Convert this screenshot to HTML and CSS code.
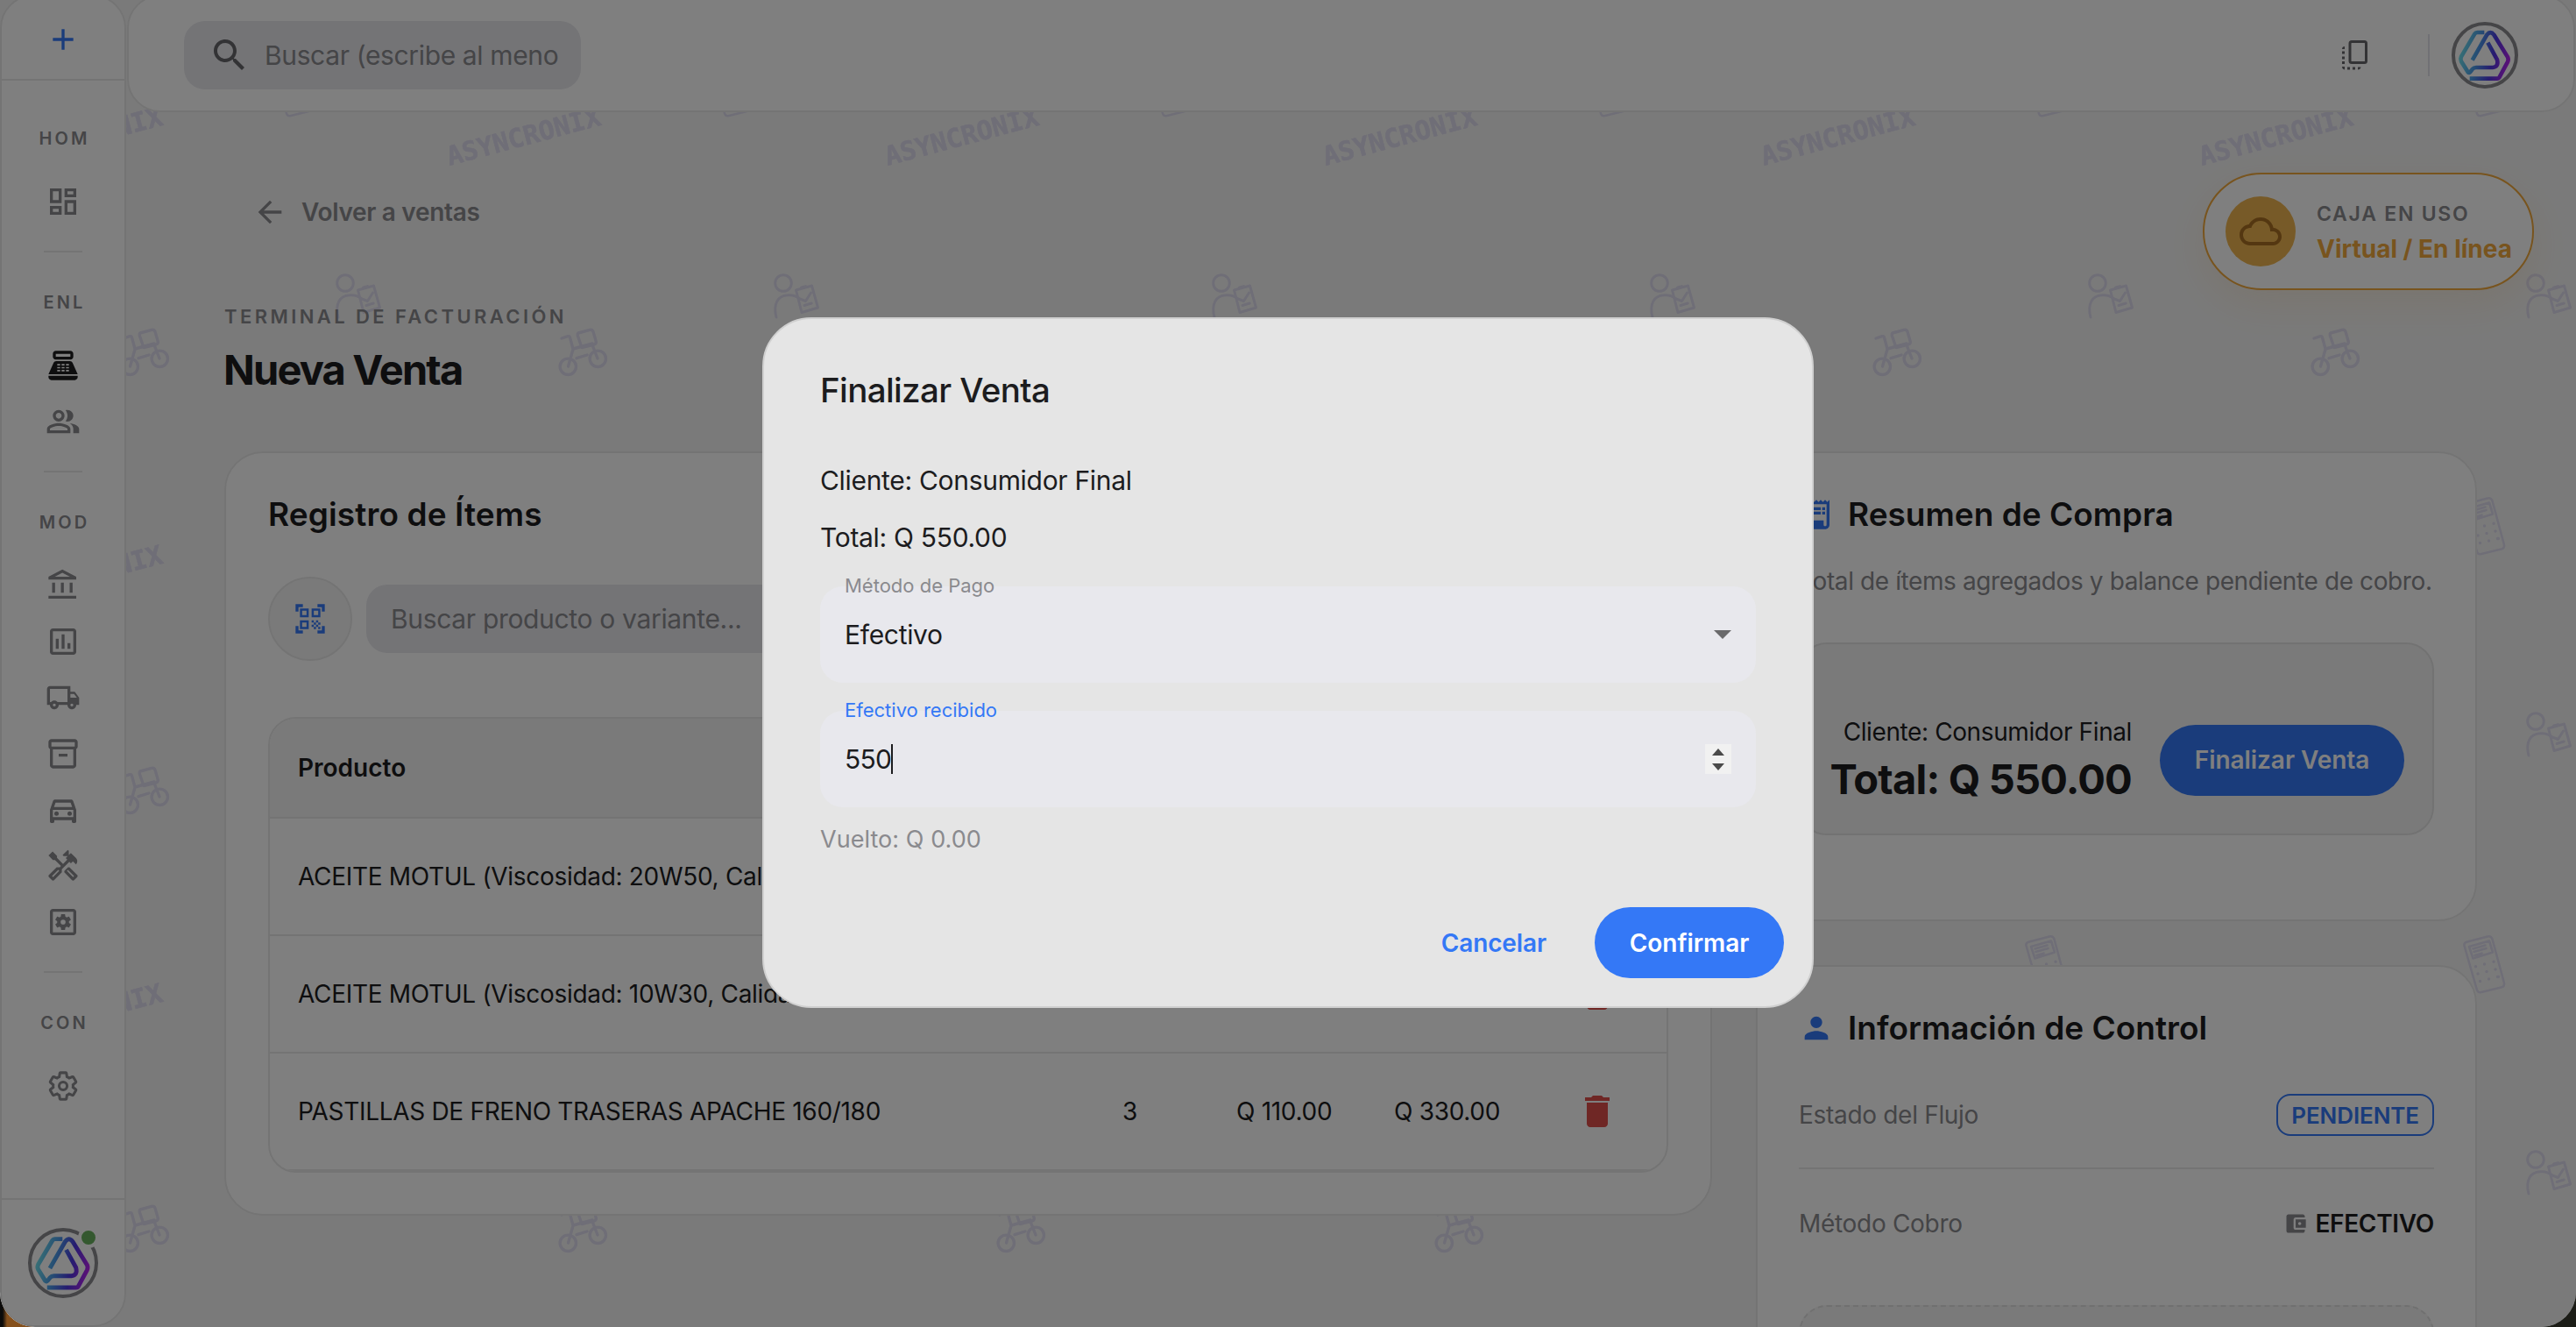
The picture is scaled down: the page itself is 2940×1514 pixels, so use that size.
FILE: index.html
```html
<!DOCTYPE html>
<html lang="es">
<head>
    <meta charset="UTF-8">
    <title>Nueva Venta - Asyncronix</title>
    <link rel="stylesheet" href="styles.css">
</head>
<body>
    <!-- Logo compartido -->
    <svg class="sprite" aria-hidden="true">
        <defs>
            <linearGradient id="logo-grad" gradientUnits="userSpaceOnUse" x1="48" y1="150" x2="226" y2="185">
                <stop offset="0" stop-color="#72e4ec"/>
                <stop offset=".35" stop-color="#4a9ae8"/>
                <stop offset=".65" stop-color="#4c38e0"/>
                <stop offset="1" stop-color="#c020f0"/>
            </linearGradient>
            <symbol id="logo" viewBox="24 45 228 228">
                <g fill="none" stroke="url(#logo-grad)" stroke-width="14">
                    <path d="M136 81H112Q106 81 103 86L57 164Q53 172 57 180L80 217Q84 221 88 216L96 206Q100 201 108 201H165Q186 199 180 174L148 116"/>
                    <path d="M95 176L145 89Q157 74 169 89L216 165Q220 174 216 182L188 234Q186 239 180 239H86"/>
                </g>
            </symbol>
            <symbol id="i-gear" viewBox="0 0 24 24">
                <path d="M19.43 12.98c.04-.32.07-.64.07-.98s-.03-.66-.07-.98l2.11-1.65c.19-.15.24-.42.12-.64l-2-3.46c-.09-.16-.26-.25-.44-.25-.06 0-.12.01-.17.03l-2.49 1c-.52-.4-1.08-.73-1.69-.98l-.38-2.65C14.46 2.18 14.25 2 14 2h-4c-.25 0-.46.18-.49.42l-.38 2.65c-.61.25-1.17.59-1.69.98l-2.49-1c-.06-.02-.12-.03-.18-.03-.17 0-.34.09-.43.25l-2 3.46c-.13.22-.07.49.12.64l2.11 1.65c-.04.32-.07.65-.07.98s.03.66.07.98l-2.11 1.65c-.19.15-.24.42-.12.64l2 3.46c.09.16.26.25.44.25.06 0 .12-.01.17-.03l2.49-1c.52.4 1.08.73 1.69.98l.38 2.65c.03.24.24.42.49.42h4c.25 0 .46-.18.49-.42l.38-2.65c.61-.25 1.17-.59 1.69-.98l2.49 1c.06.02.12.03.18.03.17 0 .34-.09.43-.25l2-3.46c.12-.22.07-.49-.12-.64l-2.11-1.65z"/>
            </symbol>
            <symbol id="i-delete" viewBox="0 0 24 24">
                <path d="M6 19c0 1.1.9 2 2 2h8c1.1 0 2-.9 2-2V7H6v12zM19 4h-3.500l-1-1h-5l-1 1H5v2h14V4z"/>
            </symbol>
        </defs>
    </svg>

    <div class="window">
        <!-- Fondo con patrón -->
        <svg class="pattern" width="2940" height="1514" aria-hidden="true">
            <defs>
                <pattern id="tile" width="500" height="500" patternUnits="userSpaceOnUse">
                    <text class="pattern-text" transform="translate(13 189) rotate(-15)">ASYNCRONIX</text>
                    <g fill="none" stroke="#dfdcee" stroke-width="3.4" stroke-linecap="round" stroke-linejoin="round">
                        <path d="M141 386l7-2.300q2-.5 2.500 1.500L154 398l22-6M154 398.500L148.500 418M176 393.500L182 409M158 408.700L170 405"/>
                        <path d="M160 380l13-3.600q3-.8 4 2l3.200 11q.6 2.800-2 3.600L164 396.500l-4.500-13q-.8-2.600.5-3.500z"/>
                        <circle cx="148.300" cy="418.300" r="9.200"/>
                        <circle cx="182.300" cy="409.300" r="9.200"/>
                    </g>
                    <g fill="none" stroke="#dfdcee" stroke-width="3" stroke-linecap="round" stroke-linejoin="round">
                        <circle cx="394" cy="323" r="9.300"/>
                        <path d="M386 362C382 346 388 337.500 399 336.800Q407 336 413 341L419.500 343.500L425.500 334"/>
                        <path d="M408.500 331l18-5 7 25-18.500 5.500zM414.500 328l5-1.400M418 348.500l8.200-2.500"/>
                    </g>
                    <g fill="none" stroke="#dfdcee" stroke-width="2.600" stroke-linecap="round" stroke-linejoin="round">
                        <path d="M316 74.500l23-6q4-1 5.500 3l13.500 50q.8 3.500-2.500 4.800l-23.500 5.700q-4 1-5-2.500L312.500 79q-.7-3.500 3.500-4.500z"/>
                        <path d="M318 80l23-6.500 4 13-22.500 7zM322.500 82.500l14-4M323.500 86l14-4M324.500 90l8-2.300"/>
                        <path stroke-width="3.400" d="M325.500 102.700h.1M335.500 100h.1M346 97.300h.1M328 111h.1M338 108.500h.1M348 106h.1M330.500 119.500h.1M340.500 117h.1M350.500 114.500h1"/>
                    </g>
                </pattern>
            </defs>
            <rect width="2940" height="1514" fill="url(#tile)"/>
        </svg>

        <aside class="sidebar">
            <div class="sidebar-top">
                <svg class="icon icon-blue" viewBox="0 0 24 24"><path d="M19 13h-6v6h-2v-6H5v-2h6V5h2v6h6v2z"/></svg>
            </div>
            <nav class="nav">
                <div class="nav-label">HOM</div>
                <a class="nav-item"><svg class="icon" viewBox="0 0 24 24"><path d="M19 5v2h-4V5h4M9 5v6H5V5h4m10 8v6h-4v-6h4M9 17v2H5v-2h4M21 3h-8v6h8V3zM11 3H3v10h8V3zm10 8h-8v10h8V11zm-10 4H3v6h8v-6z"/></svg></a>
                <hr class="nav-line">
                <div class="nav-label">ENL</div>
                <a class="nav-item active"><svg class="icon" viewBox="0 0 24 24"><path d="M17 2H7c-1.100 0-2 .9-2 2v2c0 1.100.9 2 2 2h10c1.100 0 2-.9 2-2V4c0-1.100-.9-2-2-2zm0 4H7V4h10v2zm3 16H4c-1.100 0-2-.9-2-2v-1h20v1c0 1.100-.9 2-2 2z"/><path fill-rule="evenodd" d="M18.530 10.190C18.210 9.470 17.490 9 16.700 9H7.300c-.79 0-1.510.47-1.830 1.190L2 18h20zM8 11h2v1H8zm0 2h2v1H8zm0 2h2v1H8zm3-4h2v1h-2zm0 2h2v1h-2zm0 2h2v1h-2zm3-4h2v1h-2zm0 2h2v1h-2zm0 2h2v1h-2z"/></svg></a>
                <a class="nav-item"><svg class="icon" viewBox="0 0 24 24"><path d="M16.670 13.130C18.040 14.060 19 15.320 19 17v3h4v-3c0-2.180-3.570-3.470-6.330-3.870zM15 12c2.210 0 4-1.790 4-4s-1.790-4-4-4c-.47 0-.91.1-1.330.24C14.500 5.270 15 6.580 15 8s-.5 2.730-1.330 3.760c.42.14.86.24 1.330.24zM9 12c2.210 0 4-1.790 4-4s-1.790-4-4-4-4 1.790-4 4 1.790 4 4 4zm0-6c1.100 0 2 .9 2 2s-.9 2-2 2-2-.9-2-2 .9-2 2-2zM9 13c-2.670 0-8 1.340-8 4v3h16v-3c0-2.660-5.330-4-8-4zm6 5H3v-.99C3.200 16.290 6.300 15 9 15s5.800 1.290 6 2v1z"/></svg></a>
                <hr class="nav-line">
                <div class="nav-label">MOD</div>
                <a class="nav-item"><svg class="icon" viewBox="0 0 24 24"><path d="M6.500 10h-2v7h2v-7zm6 0h-2v7h2v-7zm8.500 9H2v2h19v-2zm-2.500-9h-2v7h2v-7zm-7-6.740L16.710 6H6.290l5.210-2.740m0-2.260L2 6v2h19V6l-9.500-5z"/></svg></a>
                <a class="nav-item"><svg class="icon" viewBox="0 0 24 24"><path d="M9 17H7v-7h2v7zm4 0h-2V7h2v10zm4 0h-2v-4h2v4zm2 2H5V5h14v14zm0-16H5c-1.100 0-2 .9-2 2v14c0 1.100.9 2 2 2h14c1.100 0 2-.9 2-2V5c0-1.100-.9-2-2-2z"/></svg></a>
                <a class="nav-item"><svg class="icon" viewBox="0 0 24 24"><path d="M20 8h-3V4H3c-1.100 0-2 .9-2 2v11h2c0 1.660 1.340 3 3 3s3-1.340 3-3h6c0 1.660 1.340 3 3 3s3-1.340 3-3h2v-5l-3-4zm-.5 1.500l1.960 2.500H17V9.500h2.500zM6 18c-.55 0-1-.45-1-1s.45-1 1-1 1 .45 1 1-.45 1-1 1zm2.220-3c-.55-.61-1.330-1-2.220-1s-1.670.39-2.220 1H3V6h12v9H8.220zM18 18c-.55 0-1-.45-1-1s.45-1 1-1 1 .45 1 1-.45 1-1 1z"/></svg></a>
                <a class="nav-item"><svg class="icon" viewBox="0 0 24 24"><path d="M20 2H4c-1 0-2 .9-2 2v3.010c0 .72.43 1.340 1 1.690V20c0 1.100 1.100 2 2 2h14c.9 0 2-.9 2-2V8.700c.57-.35 1-.97 1-1.690V4c0-1.100-1-2-2-2zm-1 18H5V9h14v11zm1-13H4V4h16v3zM9 12h6v2H9z"/></svg></a>
                <a class="nav-item"><svg class="icon" viewBox="0 0 24 24"><path d="M18.920 6.010C18.720 5.420 18.160 5 17.500 5h-11c-.66 0-1.210.42-1.420 1.010L3 12v8c0 .55.45 1 1 1h1c.55 0 1-.45 1-1v-1h12v1c0 .55.45 1 1 1h1c.55 0 1-.45 1-1v-8l-2.080-5.990zM6.850 7h10.290l1.080 3.110H5.770L6.850 7zM19 17H5v-5h14v5z"/><circle cx="7.500" cy="14.500" r="1.500"/><circle cx="16.500" cy="14.500" r="1.500"/></svg></a>
                <a class="nav-item"><svg class="icon" viewBox="0 0 24 24"><path d="M21.670 18.170l-5.300-5.300h-.99l-2.540 2.540v.99l5.300 5.300c.39.39 1.020.39 1.410 0l2.120-2.120c.39-.38.39-1.020 0-1.410zM18.840 19.590l-4.240-4.240.71-.71 4.240 4.240-.71.71z"/><path d="M17.340 10.190l1.410-1.410 2.120 2.120c1.170-1.170 1.170-3.070 0-4.240l-3.540-3.540-1.410 1.410V1.710L15.220 1l-3.540 3.540.71.71h2.830l-1.410 1.410 1.060 1.060-2.890 2.890-4.130-4.130V5.060L4.830 2.040 2 4.870 5.030 7.900h1.410l4.130 4.130-.85.85H7.600l-5.300 5.300c-.39.39-.39 1.020 0 1.410l2.120 2.120c.39.39 1.020.39 1.410 0l5.300-5.300v-2.120l5.150-5.150 1.060 1.050zM9.380 15.340l-4.240 4.240-.71-.71 4.240-4.240.71.71z"/></svg></a>
                <a class="nav-item"><svg class="icon" viewBox="0 0 24 24"><path d="M19 3H5c-1.100 0-2 .9-2 2v14c0 1.100.9 2 2 2h14c1.100 0 2-.9 2-2V5c0-1.100-.9-2-2-2zm0 16H5V5h14v14z"/><use href="#i-gear" x="5.500" y="5.500" width="13" height="13"/><circle cx="12" cy="12" r="1.700" fill="#fff"/></svg></a>
                <hr class="nav-line">
                <div class="nav-label">CON</div>
                <a class="nav-item"><svg class="icon" viewBox="0 0 24 24"><g fill="none" stroke="currentColor" stroke-width="2" transform="translate(1.100 1.100) scale(.91)"><use href="#i-gear" width="24" height="24"/><circle cx="12" cy="12" r="3"/></g></svg></a>
            </nav>
            <div class="sidebar-bottom">
                <div class="avatar avatar-lg">
                    <svg class="avatar-logo"><use href="#logo"/></svg>
                    <span class="status-dot"></span>
                </div>
            </div>
        </aside>

        <div class="main">
            <header class="topbar">
                <div class="search">
                    <svg class="search-icon" viewBox="0 0 24 24"><path d="M15.500 14h-.79l-.28-.27C15.410 12.590 16 11.110 16 9.500 16 5.910 13.090 3 9.500 3S3 5.910 3 9.500 5.910 16 9.500 16c1.610 0 3.090-.59 4.230-1.570l.27.28v.79l5 4.990L20.490 19l-4.990-5zm-6 0C7.010 14 5 11.990 5 9.500S7.010 5 9.500 5 14 7.010 14 9.500 11.990 14 9.500 14z"/></svg>
                    <span>Buscar (escribe al meno</span>
                </div>
                <div class="topbar-right">
                    <svg class="copy-icon" viewBox="0 0 30 36"><rect x="9" y="2.500" width="18.500" height="24" rx="2" fill="none" stroke="currentColor" stroke-width="3"/><path d="M3 8v3H0Q0 8 3 8zM0 13.500h3v3H0zM0 19.500h3v3H0zM0 25h3v3H0zM0 31h3v3.500Q0 34 0 31zM6 31.500h3v3H6zM12 31.500h3v3h-3zM18 31.500h3.500Q21 34.500 18 34.500z"/></svg>
                    <span class="topbar-line"></span>
                    <div class="avatar">
                        <svg class="avatar-logo"><use href="#logo"/></svg>
                    </div>
                </div>
            </header>

            <div class="cash-pill">
                <div class="cash-icon">
                    <svg width="48" height="48" viewBox="0 0 24 24"><path d="M19.350 10.040C18.670 6.590 15.640 4 12 4 9.110 4 6.600 5.640 5.350 8.040 2.340 8.360 0 10.910 0 14c0 3.310 2.690 6 6 6h13c2.760 0 5-2.240 5-5 0-2.640-2.050-4.780-4.650-4.960zM19 18H6c-2.210 0-4-1.790-4-4s1.790-4 4-4h.71C7.370 7.690 9.480 6 12 6c3.040 0 5.500 2.460 5.500 5.500v.5H19c1.660 0 3 1.340 3 3s-1.340 3-3 3z"/></svg>
                </div>
                <div class="cash-text">
                    <div class="cash-label">CAJA EN USO</div>
                    <div class="cash-name">Virtual / En línea</div>
                </div>
            </div>

            <div class="content">
                <a class="back">
                    <svg class="icon" viewBox="0 0 24 24"><path d="M20 11H7.830l5.590-5.590L12 4l-8 8 8 8 1.410-1.410L7.830 13H20v-2z"/></svg>
                    Volver a ventas
                </a>
                <div class="eyebrow">TERMINAL DE FACTURACIÓN</div>
                <h1>Nueva Venta</h1>

                <div class="columns">
                    <section class="card items-card">
                        <h2>Registro de Ítems</h2>
                        <div class="product-search">
                            <button class="qr-button">
                                <svg class="icon icon-blue" viewBox="0 0 24 24"><path d="M9.500 6.500v3h-3v-3h3M11 5H5v6h6V5zm-1.500 9.500v3h-3v-3h3M11 13H5v6h6v-6zm6.500-6.500v3h-3v-3h3M19 5h-6v6h6V5zm-6 8h1.500v1.500H13V13zm1.500 1.500H16V16h-1.500v-1.500zM16 13h1.500v1.500H16V13zm-3 3h1.500v1.500H13V16zm1.500 1.500H16V19h-1.500v-1.500zM16 16h1.500v1.500H16V16zm1.500-1.500H19V16h-1.500v-1.500zm0 3H19V19h-1.500v-1.500zM22 7h-2V4h-3V2h5v5zm0 15v-5h-2v3h-3v2h5zM2 22h5v-2H4v-3H2v5zM2 2v5h2V4h3V2H2z"/></svg>
                            </button>
                            <div class="product-input">Buscar producto o variante...</div>
                        </div>
                        <div class="table">
                            <div class="row row-head">
                                <span>Producto</span><span>Cant.</span><span>Precio</span><span>Subtotal</span><span></span>
                            </div>
                            <div class="row">
                                <span>ACEITE MOTUL (Viscosidad: 20W50, Calidad: Mineral)</span><span>1</span><span>Q 110.00</span><span>Q 110.00</span>
                                <svg class="delete"><use href="#i-delete"/></svg>
                            </div>
                            <div class="row">
                                <span>ACEITE MOTUL (Viscosidad: 10W30, Calidad: Mineral)</span><span>1</span><span>Q 110.00</span><span>Q 110.00</span>
                                <svg class="delete"><use href="#i-delete"/></svg>
                            </div>
                            <div class="row">
                                <span>PASTILLAS DE FRENO TRASERAS APACHE 160/180</span><span>3</span><span>Q 110.00</span><span>Q 330.00</span>
                                <svg class="delete"><use href="#i-delete"/></svg>
                            </div>
                        </div>
                    </section>

                    <div class="side">
                        <section class="card summary-card">
                            <h2>
                                <svg class="icon icon-blue" viewBox="0 0 24 24"><path d="M19.500 3.500L18 2l-1.500 1.500L15 2l-1.500 1.500L12 2l-1.500 1.500L9 2 7.500 3.500 6 2v14H3v3c0 1.660 1.340 3 3 3h12c1.660 0 3-1.340 3-3V2l-1.500 1.500zM19 19c0 .55-.45 1-1 1s-1-.45-1-1v-3H8V5h11v14z"/><path d="M9 7h6v2H9zM16 7h2v2h-2zM9 10h6v2H9zM16 10h2v2h-2z"/></svg>
                                Resumen de Compra
                            </h2>
                            <p class="subtitle">Total de ítems agregados y balance pendiente de cobro.</p>
                            <div class="total-box">
                                <div class="total-text">
                                    <div class="total-client">Cliente: Consumidor Final</div>
                                    <div class="total-amount">Total: Q 550.00</div>
                                </div>
                                <button class="btn btn-finish">Finalizar Venta</button>
                            </div>
                        </section>

                        <section class="card info-card">
                            <h2>
                                <svg class="icon icon-blue" viewBox="0 0 24 24"><path d="M12 12c2.210 0 4-1.790 4-4s-1.790-4-4-4-4 1.790-4 4 1.790 4 4 4zm0 2c-2.670 0-8 1.340-8 4v2h16v-2c0-2.660-5.330-4-8-4z"/></svg>
                                Información de Control
                            </h2>
                            <div class="info-row">
                                <span class="info-label">Estado del Flujo</span>
                                <span class="badge">PENDIENTE</span>
                            </div>
                            <div class="info-row">
                                <span class="info-label">Método Cobro</span>
                                <span class="info-value">
                                    <svg width="28" height="28" viewBox="0 0 24 24"><path d="M21 18v1c0 1.100-.9 2-2 2H5c-1.110 0-2-.9-2-2V5c0-1.100.89-2 2-2h14c1.100 0 2 .9 2 2v1h-9c-1.110 0-2 .9-2 2v8c0 1.100.89 2 2 2h9zm-9-2h10V8H12v8zm4-2.500c-.83 0-1.500-.67-1.500-1.500s.67-1.500 1.500-1.500 1.500.67 1.500 1.500-.67 1.500-1.500 1.500z"/></svg>
                                    EFECTIVO
                                </span>
                            </div>
                            <div class="dashed-box"></div>
                        </section>
                    </div>
                </div>
            </div>
        </div>

        <!-- Modal -->
        <div class="overlay">
            <div class="modal">
                <div class="modal-title">Finalizar Venta</div>
                <p class="modal-line">Cliente: Consumidor Final</p>
                <p class="modal-line">Total: Q 550.00</p>
                <div class="field">
                    <label>Método de Pago</label>
                    <span>Efectivo</span>
                    <svg class="field-arrow" viewBox="0 0 20 10"><path d="M0 0h20L10 10z"/></svg>
                </div>
                <div class="field focused">
                    <label>Efectivo recibido</label>
                    <span class="field-number">550</span><i class="caret"></i>
                    <svg class="spinner" viewBox="0 0 30 34"><rect width="30" height="34" fill="#f1f1f1"/><path d="M8 13l7-8 7 8zM8 22l7 8 7-8z"/></svg>
                </div>
                <p class="change">Vuelto: Q 0.00</p>
                <div class="modal-actions">
                    <button class="btn-text">Cancelar</button>
                    <button class="btn btn-confirm">Confirmar</button>
                </div>
            </div>
        </div>
    </div>
</body>
</html>
```
FILE: styles.css
```css
* {
    box-sizing: border-box;
}
body {
    margin: 0;
    width: 2940px;
    height: 1514px;
    overflow: hidden;
    background: linear-gradient(90deg, #0c0b0a 0, #0c0b0a 3px, #85501c 8px, #85501c 50%, #1c1d17 50%);
    font-family: Inter, "Liberation Sans", sans-serif;
    font-size: 28px;
    line-height: 40px;
    letter-spacing: -0.011em;
    color: #1c1c1e;
}
h1, h2, p {
    margin: 0;
}
button {
    border: none;
    padding: 0;
    font: inherit;
}
.sprite {
    position: absolute;
    width: 0;
    height: 0;
}
.icon {
    width: 40px;
    height: 40px;
    fill: currentColor;
    flex-shrink: 0;
}
.icon-blue {
    color: #3478f6;
}

/* Ventana */
.window {
    position: relative;
    display: flex;
    height: 1514px;
    padding-right: 1px;
    overflow: hidden;
    background: #f5f5f5;
    border-radius: 0 0 40px 40px;
}
.pattern {
    position: absolute;
    top: 0;
    left: 0;
}
.pattern-text {
    font: bold 30px "DejaVu Sans Mono", monospace;
    letter-spacing: 0;
    fill: #dfdcee;
    stroke: #dfdcee;
    stroke-width: 0.6px;
}

/* Sidebar */
.sidebar {
    position: relative;
    display: flex;
    flex-direction: column;
    width: 144px;
    height: 1520px;
    margin-top: -6px;
    background: #fff;
    border: 2px solid #e9e9e9;
    border-radius: 38px;
}
.sidebar-top {
    display: flex;
    align-items: center;
    justify-content: center;
    height: 96px;
    padding-top: 4px;
    border-bottom: 2px solid #e9e9e9;
}
.nav {
    display: flex;
    flex-direction: column;
    align-items: center;
    padding-top: 46px;
    color: #8a8a8e;
}
.nav-label {
    height: 40px;
    margin-right: -3px;
    margin-bottom: 19.5px;
    font-size: 20px;
    font-weight: 600;
    letter-spacing: 0.155em;
}
.nav-item {
    display: flex;
    align-items: center;
    height: 64px;
}
.nav-item.active {
    color: #1c1c1e;
}
.nav-line {
    width: 44px;
    height: 2px;
    margin: 24px 0 37.5px;
    border: none;
    background: #e9e9e9;
}
.sidebar-bottom {
    display: flex;
    align-items: center;
    justify-content: center;
    height: 145px;
    margin-top: auto;
    border-top: 2px solid #e9e9e9;
}
.avatar {
    position: relative;
    width: 76px;
    height: 76px;
    border: 4px solid #8a8a8e;
    border-radius: 50%;
}
.avatar-lg {
    width: 80px;
    height: 80px;
}
.avatar-logo {
    display: block;
    width: calc(100% + 8px);
    height: calc(100% + 8px);
    margin: -4px;
}
.status-dot {
    position: absolute;
    top: -5px;
    right: -5px;
    width: 24px;
    height: 24px;
    border: 4px solid #fff;
    border-radius: 50%;
    background: #69b05f;
}

/* Barra superior */
.main {
    position: relative;
    flex: 1;
}
.topbar {
    display: flex;
    align-items: center;
    justify-content: space-between;
    height: 134px;
    margin: -6px 0 0 1px;
    padding: 4px 63px 0 63px;
    background: #fff;
    border: 2px solid #e9e9e9;
    border-radius: 38px;
}
.search {
    display: flex;
    align-items: center;
    gap: 16px;
    width: 453px;
    height: 78px;
    padding-left: 28px;
    border-radius: 24px;
    background: #e8e8ed;
    font-size: 30px;
    letter-spacing: -0.012em;
    color: #8a8a8e;
}
.search-icon {
    width: 48px;
    height: 48px;
    fill: #66666a;
}
.topbar-right {
    display: flex;
    align-items: center;
}
.copy-icon {
    width: 30px;
    height: 36px;
    color: #66666a;
    fill: currentColor;
}
.topbar-line {
    width: 2px;
    height: 48px;
    margin: 0 25px 0 68px;
    background: #e2e2ea;
}

/* Caja en uso */
.cash-pill {
    position: absolute;
    top: 197px;
    right: 47px;
    z-index: 1;
    display: flex;
    align-items: center;
    gap: 24px;
    width: 378px;
    height: 134px;
    padding-left: 24px;
    border: 2px solid #f0a83c;
    border-radius: 67px;
    background: #fff;
    box-shadow: 0 16px 48px rgba(240, 168, 60, 0.13);
}
.cash-icon {
    display: flex;
    align-items: center;
    justify-content: center;
    width: 80px;
    height: 80px;
    border-radius: 50%;
    background: #efb550;
    fill: #a86f22;
}
.cash-text {
    padding-bottom: 1px;
}
.cash-label {
    font-size: 23px;
    font-weight: 600;
    letter-spacing: 0.076em;
    color: #8a8a8e;
}
.cash-name {
    font-weight: 700;
    letter-spacing: 0;
    color: #f0a83c;
}

/* Contenido */
.content {
    position: relative;
    padding: 84px 0 0 112px;
}
.back {
    display: flex;
    align-items: center;
    gap: 16px;
    height: 60px;
    margin-left: 32px;
    font-weight: 600;
    color: #8a8a8e;
}
.eyebrow {
    margin-top: 74px;
    font-size: 22px;
    line-height: 30px;
    font-weight: 600;
    letter-spacing: 0.155em;
    color: #8a8a8e;
}
h1 {
    margin: 16px 0 63px -1px;
    font-size: 47px;
    line-height: 60px;
    font-weight: 650;
    letter-spacing: -0.039em;
}
.columns {
    display: grid;
    grid-template-columns: 1698px 823px;
    gap: 50px;
    align-items: start;
}
.card {
    padding: 46px 47px;
    background: #fff;
    border: 2px solid #e9e9e9;
    border-radius: 44px;
}
.card h2 {
    display: flex;
    align-items: center;
    gap: 16px;
    font-size: 37px;
    line-height: 48px;
    font-weight: 600;
    letter-spacing: 0;
}
.items-card {
    padding: 46px 48px 47px;
}
.items-card h2 {
    letter-spacing: 0.003em;
}
.product-search {
    display: flex;
    align-items: center;
    gap: 16px;
    margin-top: 47px;
}
.qr-button {
    display: flex;
    align-items: center;
    justify-content: center;
    width: 96px;
    height: 96px;
    border: 2px solid #e9e9e9;
    border-radius: 50%;
    background: #f5f5f5;
}
.product-input {
    flex: 1;
    height: 78px;
    padding-left: 28px;
    border-radius: 24px;
    background: #e8e8ed;
    font-size: 30px;
    line-height: 78px;
    letter-spacing: -0.011em;
    color: #8a8a8e;
}

/* Tabla */
.table {
    margin-top: 64px;
    border: 2px solid #e9e9e9;
    border-radius: 32px;
    overflow: hidden;
}
.row {
    display: grid;
    grid-template-columns: 941px 130px 180px 208px 1fr;
    align-items: center;
    height: 134px;
    padding-left: 32px;
    border-bottom: 2px solid #e9e9e9;
}
.row-head {
    height: 114px;
    background: #f5f5f5;
    font-weight: 600;
    letter-spacing: 0;
}
.delete {
    width: 48px;
    height: 48px;
    fill: #de4e4a;
}

/* Resumen */
.summary-card {
    height: 536px;
}
.subtitle {
    margin-top: 32px;
    white-space: nowrap;
    letter-spacing: -0.014em;
    color: #8a8a8e;
}
.total-box {
    display: flex;
    align-items: center;
    justify-content: flex-end;
    gap: 32px;
    height: 220px;
    margin-top: 50px;
    padding: 80px 32px 34px 0;
    border: 2px solid #e5e5e5;
    border-radius: 32px;
    background: #f5f5f5;
}
.total-text {
    text-align: right;
}
.total-client {
    letter-spacing: -0.014em;
}
.total-amount {
    margin-top: 6px;
    font-size: 47px;
    line-height: 56px;
    font-weight: 700;
    letter-spacing: -0.017em;
}
.btn {
    height: 81px;
    border-radius: 41px;
    background: #3478f6;
    color: #fff;
    font-weight: 600;
    letter-spacing: -0.002em;
}
.btn-finish {
    width: 279px;
    margin-top: 2px;
}

/* Información */
.info-card {
    height: 620px;
    margin-top: 50px;
}
.info-row {
    display: flex;
    align-items: center;
    justify-content: space-between;
    height: 124px;
}
.info-card h2 + .info-row {
    height: 122px;
    margin-top: 15px;
    border-bottom: 2px solid #e9e9e9;
}
.info-label {
    color: #8a8a8e;
}
.badge {
    height: 48px;
    padding: 0 15px;
    border: 2px solid #3478f6;
    border-radius: 16px;
    font-size: 26px;
    line-height: 45px;
    font-weight: 600;
    letter-spacing: -0.004em;
    color: #3478f6;
}
.info-value {
    display: flex;
    align-items: center;
    gap: 8px;
    font-weight: 600;
}
.info-value svg {
    fill: #8a8a8e;
}
.dashed-box {
    height: 200px;
    margin-top: 31px;
    border: 2px dashed #e0e0e0;
    border-radius: 32px;
    background: #f5f5f5;
}

/* Modal */
.overlay {
    position: absolute;
    inset: 0;
    z-index: 10;
    display: flex;
    justify-content: center;
    align-items: center;
    padding-bottom: 2px;
    background: rgba(0, 0, 0, 0.5);
}
.modal {
    width: 1200px;
    height: 788px;
    padding: 56px 64px 0;
    background: #e5e5e5;
    border: 2px solid #d0d0d0;
    border-radius: 56px;
}
.modal-title {
    margin-bottom: 56px;
    font-size: 38.5px;
    line-height: 50px;
    font-weight: 500;
    letter-spacing: -0.016em;
}
.modal-line {
    margin-bottom: 21px;
    font-size: 30px;
    line-height: 44px;
}
.field {
    position: relative;
    display: flex;
    align-items: center;
    height: 110px;
    margin-top: 34px;
    padding: 0 28px;
    border-radius: 26px;
    background: #e8e8ed;
    font-size: 30px;
}
.field.focused {
    margin-top: 32px;
}
.field label {
    position: absolute;
    top: -15px;
    left: 28px;
    font-size: 22px;
    line-height: 28px;
    letter-spacing: 0;
    color: #8a8a8e;
}
.field.focused label {
    color: #3478f6;
}
.field-arrow {
    width: 20px;
    height: 10px;
    margin-left: auto;
    fill: #69696b;
}
.field-number {
    letter-spacing: -0.025em;
}
.caret {
    width: 2px;
    height: 34px;
    background: #1c1c1e;
}
.spinner {
    width: 30px;
    height: 34px;
    margin-left: auto;
    fill: #4a4a4a;
}
.change {
    margin-top: 17px;
    font-size: 27px;
    letter-spacing: 0.002em;
    color: #8a8a8e;
}
.modal-actions {
    display: flex;
    justify-content: flex-end;
    margin: 57px -32px 0 0;
}
.btn-text {
    padding: 0 55px;
    background: none;
    font-weight: 600;
    letter-spacing: -0.004em;
    color: #3478f6;
}
.btn-confirm {
    width: 216px;
}
```
